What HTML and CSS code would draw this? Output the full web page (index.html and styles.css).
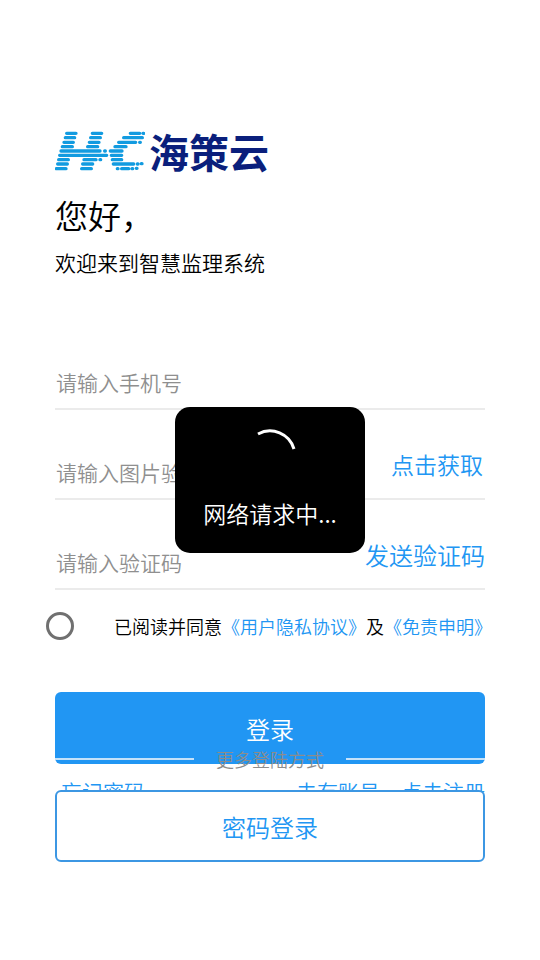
FILE: index.html
```html
<!DOCTYPE html>
<html lang="zh-CN">
<head>
<meta charset="utf-8">
<meta name="viewport" content="width=device-width, initial-scale=1">
<title>海策云 登录</title>
<link rel="stylesheet" href="styles.css">
</head>
<body>
<main class="page">
  <header>
    <div class="brand">
      <svg class="brand-mark" viewBox="45 36 270 120" aria-hidden="true">
        <g fill="none" stroke="#129be0" stroke-width="10" stroke-linecap="round">
          <path d="M80 43H108M157 43H185M271 43H299M309 43h2"/>
          <path d="M76 56H104M152 56H181M251 56H307"/>
          <path d="M72 70H100M148 70H177M236 70H287M299 70h2"/>
          <path d="M67 83H97M143 83H173M225 83H258"/>
          <path d="M63 96H180M194 96h2M211 96H246"/>
          <path d="M59 109H200M214 109H245"/>
          <path d="M56 122H85M132 122H168M180 122h2M217 122H245"/>
          <path d="M53 135H82M128 135H158M220 135H281M292 135h2M304 134h2"/>
          <path d="M49 149H78M125 149H154M232 149h2M245 149H266M276 149h2M289 148h2"/>
        </g>
      </svg>
      <span class="brand-name">海策云</span>
    </div>
    <h1 class="greeting">您好，</h1>
    <p class="welcome">欢迎来到智慧监理系统</p>
  </header>
  <form class="form">
    <div class="field">
      <input class="field-input" type="tel" placeholder="请输入手机号" aria-label="手机号">
    </div>
    <div class="field">
      <input class="field-input" type="text" placeholder="请输入图片验证码" aria-label="图片验证码">
      <button class="field-action field-action-image" type="button">点击获取</button>
    </div>
    <div class="field">
      <input class="field-input" type="text" placeholder="请输入验证码" aria-label="验证码">
      <button class="field-action" type="button">发送验证码</button>
    </div>
    <div class="agreement">
      <input class="agreement-radio" type="radio" id="agree">
      <div class="agreement-text"><label for="agree">已阅读并同意</label><a href="#privacy">《用户隐私协议》</a>及<a href="#disclaimer">《免责申明》</a></div>
    </div>
    <button class="login" type="submit">登录</button>
    <div class="links">
      <a href="#forgot">忘记密码</a>
      <a href="#register">去有账号，点击注册</a>
    </div>
  </form>
  <footer class="more">
    <div class="more-title">更多登陆方式</div>
    <button class="password-login" type="button">密码登录</button>
  </footer>
</main>
<div class="overlay">
  <div class="loading" role="status">
    <svg class="spinner" viewBox="0 0 56 56" aria-hidden="true">
      <path d="M16 6A25 25 0 0 1 52 21" fill="none" stroke="#fff" stroke-width="3"/>
    </svg>
    <span>网络请求中...</span>
  </div>
</div>
</body>
</html>
```
FILE: styles.css
```css
* {
  box-sizing: border-box;
}

body {
  margin: 0;
  background: #fff;
  color: #000;
  font-family: "Noto Sans CJK SC", sans-serif;
  font-size: 21px;
  font-weight: 350;
}

button,
input {
  font: inherit;
}

button {
  padding: 0;
  cursor: pointer;
}

a {
  color: #2196f3;
  text-decoration: none;
}

.page {
  position: relative;
  min-height: 100vh;
  padding: 130px 55px 98px;
}

.brand {
  display: flex;
  align-items: center;
  gap: 4px;
  height: 42px;
}

.brand-mark {
  width: 90px;
  height: 40px;
}

.brand-name {
  color: #0a1f7c;
  font-size: 40px;
  font-weight: 700;
  line-height: 40px;
}

.greeting {
  margin: 19px 0 0;
  font-size: 33px;
  font-weight: 350;
  line-height: 48px;
}

.welcome {
  margin: 8px 0 0;
  line-height: 30px;
}

.form {
  margin-top: 43px;
}

.field {
  display: flex;
  align-items: flex-end;
  height: 90px;
  border-bottom: 2px solid #ebebeb;
}

.field-input {
  flex: 1;
  min-width: 0;
  height: 52px;
  padding: 0 1px;
  border: 0;
  outline: 0;
  background: transparent;
}

.field-input::placeholder {
  color: #8f8f8f;
  opacity: 1;
}

.field-action {
  height: 68px;
  border: 0;
  background: transparent;
  color: #2196f3;
  font-size: 24px;
}

.field-action-image {
  padding: 0 2px;
  font-size: 23px;
}

.agreement {
  display: flex;
  align-items: center;
  justify-content: space-between;
  height: 72px;
  margin: 0 -7px 0 -9px;
}

.agreement-radio {
  appearance: none;
  width: 28px;
  height: 28px;
  margin: 0;
  border: 3px solid #707070;
  border-radius: 50%;
}

.agreement-text {
  font-size: 18px;
  white-space: nowrap;
}

.login {
  display: block;
  width: 100%;
  height: 72px;
  margin-top: 30px;
  border: 0;
  border-radius: 6px;
  background: #2196f3;
  color: #fff;
  font-size: 24px;
}

.links {
  display: flex;
  justify-content: space-between;
  margin-top: 12px;
  padding-left: 6px;
  line-height: 30px;
}

/* Stays at the foot of the screen and covers the form when space is short. */
.more {
  position: absolute;
  right: 55px;
  bottom: 98px;
  left: 55px;
}

.more-title {
  display: flex;
  align-items: center;
  gap: 22px;
  margin-bottom: 17px;
  color: #8c8c8c;
  font-size: 18px;
  line-height: 28px;
}

.more-title::before,
.more-title::after {
  flex: 1;
  height: 2px;
  background: #c4e2fa;
  content: "";
}

.password-login {
  width: 100%;
  height: 72px;
  border: 2px solid #3c97e3;
  border-radius: 6px;
  background: #fff;
  color: #2196f3;
  font-size: 24px;
}

.overlay {
  position: fixed;
  inset: 0;
  display: flex;
  align-items: center;
  justify-content: center;
}

.loading {
  display: flex;
  flex-direction: column;
  align-items: center;
  gap: 12px;
  padding: 21px 28px 23px;
  border-radius: 15px;
  background: #000;
  color: #fff;
  font-size: 23px;
  line-height: 34px;
}

.spinner {
  width: 56px;
  height: 56px;
}
```
